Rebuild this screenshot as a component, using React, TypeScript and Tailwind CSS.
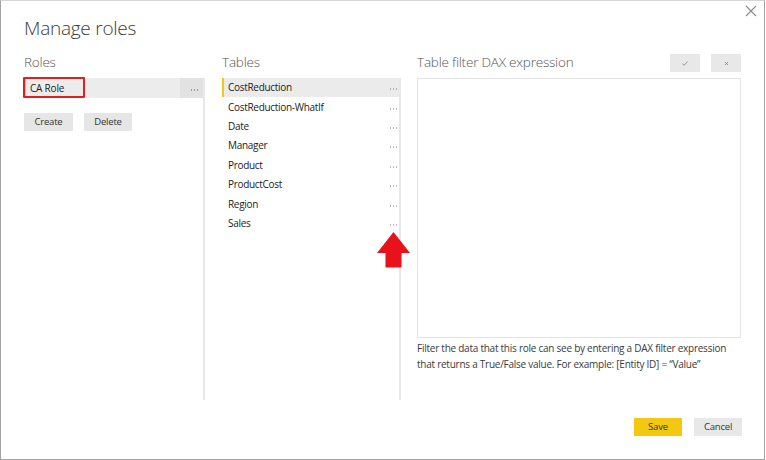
import React from "react";

const tables = [
  "CostReduction",
  "CostReduction-WhatIf",
  "Date",
  "Manager",
  "Product",
  "ProductCost",
  "Region",
  "Sales",
];

function Dots({ color = "#666" }: { color?: string }) {
  return (
    <svg width="7" height="2" viewBox="0 0 7 2">
      <rect x="0" y="0.5" width="1" height="1" fill={color} />
      <rect x="3" y="0.5" width="1" height="1" fill={color} />
      <rect x="6" y="0.5" width="1" height="1" fill={color} />
    </svg>
  );
}

export default function App() {
  return (
    <div
      className="relative w-[766px] h-[460px] bg-white"
      style={{ fontFamily: '"Open Sans", "Noto Sans", sans-serif' }}
    >
      <div className="w-[765px] h-[460px] border border-[#a3a3a3] border-t-[#d6d6d6] flex flex-col pl-[23px]">
        <div className="mt-[13px] h-[28px] text-[19px] leading-[28px] font-light tracking-[-0.25px] text-[#3a3a3a]">
          Manage roles
        </div>
        <div className="mt-[10px] flex">
          {/* Roles */}
          <div className="w-[181px] flex flex-col">
            <div className="h-[26px] text-[13.5px] leading-[20px] font-light tracking-[-0.2px] text-[#555]">
              Roles
            </div>
            <div className="h-[322px] border-r-2 border-[#e8e8e8]">
              <div className="relative flex h-[20px] bg-[#ececec] border-l-2 border-[#f2c811]">
                <div className="flex-1 pl-[4px] text-[10px] leading-[20px] tracking-[-0.2px] text-[#222]">CA Role</div>
                <div className="w-[23px] bg-[#e2e2e2] flex items-center justify-end pr-[5px] pt-[3px]">
                  <Dots color="#555" />
                </div>
                <div className="absolute left-[-3px] top-[-1px] w-[62px] h-[21px] border-2 border-[#e0201e] rounded-[1px]" />
              </div>
              <div className="mt-[15px] flex gap-[11px]">
                <div className="w-[49px] h-[18px] bg-[#e6e6e6] text-[9.5px] leading-[18px] tracking-[-0.2px] text-center text-[#333]">
                  Create
                </div>
                <div className="w-[48px] h-[18px] bg-[#e6e6e6] text-[9.5px] leading-[18px] tracking-[-0.2px] text-center text-[#333]">
                  Delete
                </div>
              </div>
            </div>
          </div>
          {/* Tables */}
          <div className="ml-[17px] w-[179px] flex flex-col">
            <div className="h-[26px] text-[13.5px] leading-[20px] font-light tracking-[-0.2px] text-[#555]">
              Tables
            </div>
            <div className="h-[322px] border-r-2 border-[#e8e8e8]">
              {tables.map((t, i) => (
                <div
                  key={t}
                  className={
                    i === 0
                      ? "flex items-center h-[19.4px] bg-[#ebebeb] border-l-2 border-[#f2c811] pl-[4px] pr-[2px]"
                      : "flex items-center h-[19.4px] border-l-2 border-transparent pl-[4px] pr-[2px]"
                  }
                >
                  <div className="flex-1 text-[10px] tracking-[-0.3px] text-[#222]">{t}</div>
                  <div className="pt-[3px] flex">
                    <Dots color="#777" />
                  </div>
                </div>
              ))}
            </div>
          </div>
          {/* DAX */}
          <div className="ml-[16px] w-[324px] flex flex-col">
            <div className="h-[26px] flex items-start justify-between">
              <div className="text-[13.5px] leading-[20px] font-light tracking-[-0.2px] text-[#555]">
                Table filter DAX expression
              </div>
              <div className="flex gap-[11px] mt-[2px]">
                <div className="w-[30px] h-[18px] bg-[#e8e8e8] flex items-center justify-center">
                  <svg width="6" height="5" viewBox="0 0 6 5">
                    <path d="M0.5 2.8 L2.2 4.3 L5.5 0.6" stroke="#888" strokeWidth="0.9" fill="none" />
                  </svg>
                </div>
                <div className="w-[30px] h-[18px] bg-[#e8e8e8] flex items-center justify-center">
                  <svg width="5" height="5" viewBox="0 0 5 5">
                    <path d="M1 1 L4 4 M4 1 L1 4" stroke="#888" strokeWidth="0.9" fill="none" />
                  </svg>
                </div>
              </div>
            </div>
            <div className="h-[260px] border border-[#e4e4e4]" />
            <div className="mt-[2px] text-[10px] leading-[16px] tracking-[-0.25px] text-[#3a3a3a]">
              <div>Filter the data that this role can see by entering a DAX filter expression</div>
              <div>that returns a True/False value. For example: [Entity ID] = “Value”</div>
            </div>
          </div>
        </div>
        <div className="mt-[18px] flex justify-end pr-[22px] gap-[12px]">
          <div className="w-[48px] h-[18px] bg-[#f2c811] text-[9.5px] leading-[18px] tracking-[-0.2px] text-center text-[#333]">
            Save
          </div>
          <div className="w-[48px] h-[18px] bg-[#e8e8e8] text-[9.5px] leading-[18px] tracking-[-0.2px] text-center text-[#333]">
            Cancel
          </div>
        </div>
      </div>
      {/* Close */}
      <svg className="absolute left-[745px] top-[5px]" width="12" height="12" viewBox="0 0 12 12">
        <path d="M1 1 L11 11 M11 1 L1 11" stroke="#8a8a8a" strokeWidth="1.1" fill="none" />
      </svg>
      {/* Red arrow annotation */}
      <svg className="absolute left-[377px] top-[232px]" width="33" height="36" viewBox="0 0 33 36">
        <polygon points="16.5,0 33,21 24.5,21 24.5,35.5 8.5,35.5 8.5,21 0,21" fill="#e8121c" />
      </svg>
    </div>
  );
}
